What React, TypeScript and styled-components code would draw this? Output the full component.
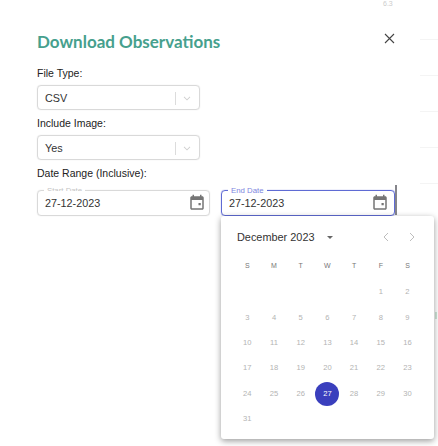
import React from "react";
import styled, { createGlobalStyle } from "styled-components";

const weeks: (number | null)[][] = [
  [null, null, null, null, null, 1, 2],
  [3, 4, 5, 6, 7, 8, 9],
  [10, 11, 12, 13, 14, 15, 16],
  [17, 18, 19, 20, 21, 22, 23],
  [24, 25, 26, 27, 28, 29, 30],
  [31, null, null, null, null, null, null],
];

const dayNames = ["S", "M", "T", "W", "T", "F", "S"];

const CalendarIcon = () => (
  <svg width="18" height="18" viewBox="0 0 24 24" fill="#757575">
    <path d="M19 3h-1V1h-2v2H8V1H6v2H5c-1.11 0-2 .9-2 2v14c0 1.1.89 2 2 2h14c1.1 0 2-.9 2-2V5c0-1.1-.9-2-2-2m0 16H5V8h14zm-5-7h3v3h-3z" />
  </svg>
);

const Chevron = () => (
  <svg width="10" height="10" viewBox="0 0 20 20" fill="#cfcfcf">
    <path d="M4.5 7.2 3.4 8.3 10 14.9l6.6-6.6-1.1-1.1L10 12.7z" />
  </svg>
);

const App = () => (
  <Page>
    <GlobalStyle />
    <Backdrop width="438" height="446">
      <text x="383" y="6" fontSize="7" fill="#cccccc" fontFamily="Liberation Sans">
        6.3
      </text>
      <line x1="420" x2="438" y1="39.5" y2="39.5" stroke="#f4f4f4" />
      <line x1="420" x2="438" y1="75.5" y2="75.5" stroke="#f4f4f4" />
      <line x1="420" x2="438" y1="111.5" y2="111.5" stroke="#f4f4f4" />
      <line x1="420" x2="438" y1="147.5" y2="147.5" stroke="#f4f4f4" />
      <line x1="420" x2="438" y1="183.5" y2="183.5" stroke="#f4f4f4" />
      <rect x="435" y="312" width="2" height="7" fill="#cfe6d8" />
    </Backdrop>
    <Header>
      <Title>Download Observations</Title>
      <CloseButton aria-label="Close">
        <svg width="11" height="11" viewBox="0 0 11 11" stroke="#444" strokeWidth="1.1">
          <path d="M1 1l9 9M10 1l-9 9" />
        </svg>
      </CloseButton>
    </Header>
    <Form>
      <Label>File Type:</Label>
      <SelectBox>
        <span>CSV</span>
        <SelectEnd>
          <Divider />
          <Chevron />
        </SelectEnd>
      </SelectBox>
      <Label>Include Image:</Label>
      <SelectBox>
        <span>Yes</span>
        <SelectEnd>
          <Divider />
          <Chevron />
        </SelectEnd>
      </SelectBox>
      <DateLabel>Date Range (Inclusive):</DateLabel>
      <DateRow>
        <DateField>
          <FieldLegend>Start Date</FieldLegend>
          <span>27-12-2023</span>
          <CalendarIcon />
        </DateField>
        <DateField $focused>
          <FieldLegend $focused>End Date</FieldLegend>
          <span>27-12-2023</span>
          <CalendarIcon />
        </DateField>
        <RowEdge />
        <Popup>
          <MonthBar>
            <MonthName>
              December 2023
              <Caret />
            </MonthName>
            <MonthArrows>
              <svg width="8" height="10" viewBox="0 0 8 10" fill="none" stroke="#bdbdbd" strokeWidth="1">
                <path d="M6 1 2 5l4 4" />
              </svg>
              <svg width="8" height="10" viewBox="0 0 8 10" fill="none" stroke="#bdbdbd" strokeWidth="1">
                <path d="M2 1l4 4-4 4" />
              </svg>
            </MonthArrows>
          </MonthBar>
          <DaysHead>
            {dayNames.map((d, i) => (
              <DayName key={i}>{d}</DayName>
            ))}
          </DaysHead>
          <Weeks>
            {weeks.map((week, w) => (
              <Week key={w}>
                {week.map((day, i) => (
                  <Day key={i} $selected={day === 27}>
                    {day}
                  </Day>
                ))}
              </Week>
            ))}
          </Weeks>
        </Popup>
      </DateRow>
    </Form>
  </Page>
);

export default App;

const GlobalStyle = createGlobalStyle`
  html, body {
    margin: 0;
    background: #fff;
  }
  * {
    box-sizing: border-box;
  }
`;

const Page = styled.div`
  position: relative;
  width: 438px;
  height: 446px;
  overflow: hidden;
  padding: 30px 0 0 37px;
  font-family: "Liberation Sans", Arial, sans-serif;
  color: #222;
`;

const Backdrop = styled.svg`
  position: absolute;
  top: 0;
  left: 0;
  pointer-events: none;
`;

const Header = styled.header`
  position: relative;
  display: flex;
  justify-content: space-between;
  align-items: center;
  width: 358px;
  height: 22px;
`;

const Title = styled.h2`
  margin: 0;
  font-family: Lato, sans-serif;
  font-size: 17px;
  font-weight: 700;
  color: #46a08d;
`;

const CloseButton = styled.button`
  display: flex;
  padding: 0;
  border: 0;
  background: none;
  margin-top: -5px;
`;

const Form = styled.div`
  position: relative;
  display: flex;
  flex-direction: column;
  margin-top: 8px;
`;

const Label = styled.label`
  display: block;
  height: 25px;
  padding-top: 6px;
  font-size: 10.5px;
  line-height: 15px;
  color: #222;
`;

const DateLabel = styled(Label)`
  height: 30px;
`;

const SelectBox = styled.div`
  display: flex;
  justify-content: space-between;
  align-items: center;
  width: 163px;
  height: 25px;
  padding: 1px 7px 0;
  border: 1px solid #d9d9d9;
  border-radius: 4px;
  box-shadow: 0 0 1px #d4d4d4;
  font-size: 10.8px;
  color: #333;
`;

const SelectEnd = styled.div`
  display: flex;
  align-items: center;
  gap: 6px;
`;

const Divider = styled.i`
  width: 1px;
  height: 13px;
  background: #dcdcdc;
`;

const DateRow = styled.div`
  position: relative;
  display: flex;
  gap: 11px;
`;

const DateField = styled.div<{ $focused?: boolean }>`
  position: relative;
  display: flex;
  justify-content: space-between;
  align-items: center;
  width: ${(p) => (p.$focused ? "174px" : "173px")};
  height: 26px;
  padding: 0 ${(p) => (p.$focused ? "5px" : "3px")} 0 7px;
  border: 1px solid ${(p) => (p.$focused ? "#5f6bd4" : "#d9d9d9")};
  border-radius: 4px;
  box-shadow: ${(p) => (p.$focused ? "0 0 1px #5f6bd4" : "0 0 1px #d4d4d4")};
  font-size: 10.8px;
  color: #333;
`;

const FieldLegend = styled.span<{ $focused?: boolean }>`
  position: absolute;
  top: -5px;
  left: 6px;
  height: ${(p) => (p.$focused ? "9px" : "5px")};
  overflow: hidden;
  padding: 0 3px;
  background: #fff;
  font-size: 7.8px;
  line-height: 9px;
  color: ${(p) => (p.$focused ? "#7d85e0" : "#c4c4c4")};
`;

const RowEdge = styled.i`
  position: absolute;
  top: -5px;
  left: 358px;
  width: 2px;
  height: 30px;
  background: #85858b;
`;

const Popup = styled.div`
  position: absolute;
  top: 26px;
  left: 184px;
  width: 213px;
  height: 223px;
  padding: 0 14px 0 16px;
  background: #fff;
  border-radius: 3px;
  box-shadow: 0 2px 6px rgba(0, 0, 0, 0.4);
`;

const MonthBar = styled.div`
  display: flex;
  justify-content: space-between;
  align-items: center;
  height: 42px;
`;

const MonthName = styled.div`
  display: flex;
  align-items: center;
  gap: 12px;
  font-size: 10.9px;
  color: #333;
`;

const Caret = styled.i`
  border-top: 3px solid #666;
  border-left: 3px solid transparent;
  border-right: 3px solid transparent;
`;

const MonthArrows = styled.div`
  display: flex;
  gap: 18px;
  margin-right: 4px;
`;

const DaysHead = styled.div`
  display: grid;
  grid-template-columns: repeat(7, 26.7px);
  height: 16px;
  margin: 3px 0 0 -3px;
`;

const DayName = styled.span`
  font-size: 7px;
  line-height: 10px;
  text-align: center;
  color: #777;
`;

const Weeks = styled.div`
  display: flex;
  flex-direction: column;
  margin: 2.5px 0 0 -3px;
`;

const Week = styled.div`
  display: grid;
  grid-template-columns: repeat(7, 26.7px);
  height: 25.4px;
`;

const Day = styled.span<{ $selected?: boolean }>`
  justify-self: center;
  align-self: center;
  width: 24px;
  height: 24px;
  border-radius: 50%;
  font-size: 7.6px;
  line-height: 24px;
  text-align: center;
  color: ${(p) => (p.$selected ? "#fff" : "#b3b3b3")};
  background: ${(p) => (p.$selected ? "#3a3fbd" : "transparent")};
`;
